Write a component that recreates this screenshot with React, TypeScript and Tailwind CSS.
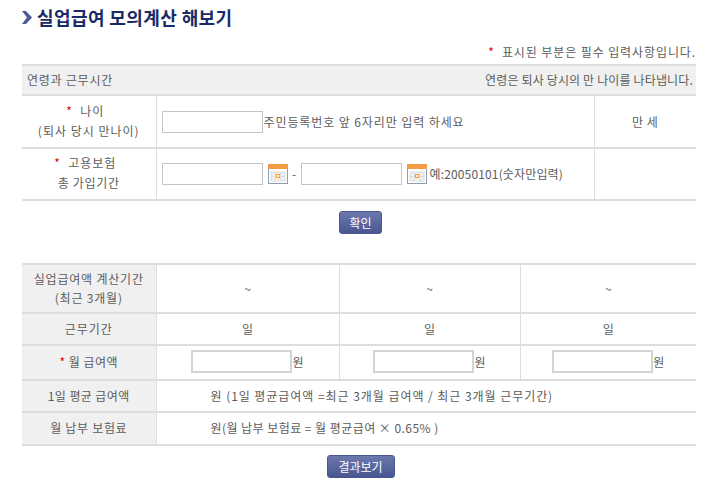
import React from "react";

const Star = () => <span className="text-[#e00000] text-[12px]">*</span>;
const Input = ({ w = "w-[101px]" }: { w?: string }) => (
  <input type="text" className={`${w} h-[22px] bg-white border border-[#c4c4c4] shrink-0`} />
);
const Cal = () => (
  <svg width="20" height="20" viewBox="0 0 20 20" className="shrink-0">
    <rect x="0.5" y="0.5" width="19" height="19" fill="#fff" stroke="#8f9bb0" />
    <rect x="0" y="0" width="20" height="5" fill="#f59a45" />
    <rect x="3" y="8" width="14" height="9" fill="#f1f1f1" stroke="#dcdcdc" />
    <path d="M7 8v9M13 8v9M3 12.5h14" stroke="#dcdcdc" />
    <rect x="8" y="10" width="4" height="4" fill="#f59a45" />
    <rect x="9" y="11" width="2" height="2" fill="#fff" />
  </svg>
);
const Btn = ({ children, w }: { children: React.ReactNode; w: string }) => (
  <button className={`${w} h-[23px] rounded-[3px] border border-[#4a5590] bg-gradient-to-b from-[#6c78ad] to-[#4a5690] text-white text-[12px] leading-[21px]`}>
    {children}
  </button>
);
const th = "bg-[#f0f0f0] border-r border-b-2 border-[#dddddd] text-center font-normal align-middle p-0";
const td = "border-r border-b-2 border-[#dddddd] text-center align-middle p-0";
const Won = () => (
  <div className="flex items-center justify-center pb-[2px]">
    <input type="text" className="w-[101px] h-[23px] bg-white border-2 border-[#d4d4d4] shrink-0" />
    <span>원</span>
  </div>
);

export default function App() {
  return (
    <div className="w-[720px] h-[497px] bg-white overflow-hidden text-[12px] text-[#5c5c5c]" style={{ fontFamily: '"Noto Sans CJK KR", "Noto Sans", sans-serif' }}>
      <div className="ml-[22px] w-[674px]">
        <h1 className="flex items-center h-[34px] gap-[5px] text-[18px] leading-[34px] font-bold text-[#1b2a66] tracking-[0.4px]">
          <svg width="10" height="13" viewBox="0 0 10 13" className="shrink-0"><path d="M0 0h4l6 6.5-6 6.5H0l5-6.5z" fill="#4c5a96" /></svg>
          실업급여 모의계산 해보기
        </h1>
        <p className="h-[30px] leading-[36px] text-right tracking-[0.9px]">
          <Star /> &nbsp;표시된 부분은 필수 입력사항입니다.
        </p>
        <div className="flex justify-between items-center h-[32px] pb-[1px] bg-[#f0f0f0] border-t-2 border-b-2 border-[#dddddd] pl-[5px] pr-[3px]">
          <span className="tracking-[0.75px]">연령과 근무시간</span>
          <span className="tracking-[0.15px]">연령은 퇴사 당시의 만 나이를 나타냅니다.</span>
        </div>
        <table className="w-[674px] table-fixed border-collapse">
          <colgroup>
            <col className="w-[134px]" />
            <col className="w-[438px]" />
            <col className="w-[102px]" />
          </colgroup>
          <tbody>
            <tr className="h-[52px]">
              <td className={td}>
                <div className="leading-[20px] pb-[2px] tracking-[1px]">
                  <div className="pr-[7px]"><Star /> &nbsp;나이</div>
                  <div>(퇴사 당시 만나이)</div>
                </div>
              </td>
              <td className={td}>
                <div className="flex items-center pl-[5px]">
                  <Input />
                  <span className="ml-[1px] tracking-[0.9px]">주민등록번호 앞 6자리만 입력 하세요</span>
                </div>
              </td>
              <td className={`${td} border-r-0 tracking-[0.5px]`}>만 세</td>
            </tr>
            <tr className="h-[52px]">
              <td className={td}>
                <div className="leading-[20px] pb-[2px] tracking-[1px]">
                  <div className="pr-[7px]"><Star /> &nbsp;고용보험</div>
                  <div className="tracking-[0.7px]">총 가입기간</div>
                </div>
              </td>
              <td className={td}>
                <div className="flex items-center pl-[5px]">
                  <Input />
                  <span className="w-[5px]" />
                  <Cal />
                  <span className="w-[13px] text-center">-</span>
                  <Input />
                  <span className="w-[5px]" />
                  <Cal />
                  <span className="ml-[3px] tracking-[0.15px]">예:20050101(숫자만입력)</span>
                </div>
              </td>
              <td className={`${td} border-r-0`} />
            </tr>
          </tbody>
        </table>
        <div className="flex justify-center pt-[10px] pl-[3px] h-[62px]">
          <Btn w="w-[43px]">확인</Btn>
        </div>
        <table className="w-[674px] table-fixed border-collapse border-t-2 border-[#dddddd]">
          <colgroup>
            <col className="w-[134px]" />
            <col className="w-[183px]" />
            <col className="w-[181px]" />
            <col className="w-[176px]" />
          </colgroup>
          <tbody>
            <tr className="h-[49px]">
              <th className={th}>
                <div className="leading-[19px] pb-[2px] tracking-[0.8px]">
                  <div>실업급여액 계산기간</div>
                  <div>(최근 3개월)</div>
                </div>
              </th>
              <td className={td}>~</td>
              <td className={td}>~</td>
              <td className={`${td} border-r-0`}>~</td>
            </tr>
            <tr className="h-[32px]">
              <th className={`${th} tracking-[0.9px]`}>근무기간</th>
              <td className={td}>일</td>
              <td className={td}>일</td>
              <td className={`${td} border-r-0`}>일</td>
            </tr>
            <tr className="h-[35px]">
              <th className={`${th} tracking-[0.5px] pb-[2px]`}><Star /> 월 급여액</th>
              <td className={td}><Won /></td>
              <td className={td}><Won /></td>
              <td className={`${td} border-r-0`}><Won /></td>
            </tr>
            <tr className="h-[32px]">
              <th className={`${th} tracking-[0.4px] pb-[1px]`}>1일 평균 급여액</th>
              <td className={`${td} border-r-0 text-left pl-[54px] pb-[1px] tracking-[0.95px]`} colSpan={3}>원 (1일 평균급여액 =최근 3개월 급여액 / 최근 3개월 근무기간)</td>
            </tr>
            <tr className="h-[33px]">
              <th className={`${th} tracking-[0.7px] pb-[1px]`}>월 납부 보험료</th>
              <td className={`${td} border-r-0 text-left pl-[54px] pb-[1px] tracking-[0.45px]`} colSpan={3}>원(월 납부 보험료 = 월 평균급여 × 0.65% )</td>
            </tr>
          </tbody>
        </table>
        <div className="flex justify-center pt-[9px] pl-[3px]">
          <Btn w="w-[68px]">결과보기</Btn>
        </div>
      </div>
    </div>
  );
}
